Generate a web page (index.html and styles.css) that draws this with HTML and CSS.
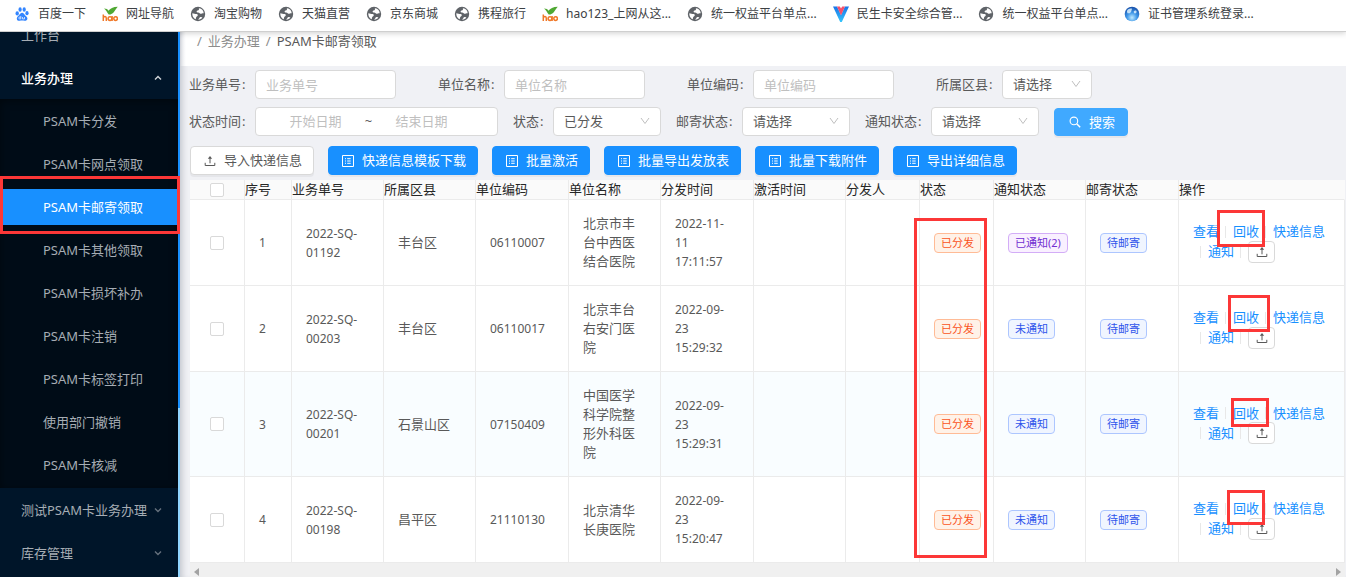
FILE: index.html
```html
<!DOCTYPE html>
<html lang="zh-CN">
<head>
<meta charset="utf-8">
<title>PSAM卡邮寄领取</title>
<link rel="stylesheet" href="styles.css">
</head>
<body>
<svg class="sprite" aria-hidden="true">
  <symbol id="i-paw" viewBox="0 0 16 16"><g fill="#3385ff"><ellipse cx="3.2" cy="7.4" rx="1.700" ry="2.100"/><ellipse cx="6.100" cy="3.500" rx="1.600" ry="2.200"/><ellipse cx="10.200" cy="3.500" rx="1.600" ry="2.200"/><ellipse cx="13" cy="7.200" rx="1.600" ry="2.100"/><path d="M8.1 6.8c1.6 0 2.1 1.5 3.2 2.6 1.1 1 2.300 1.800 2.100 3.400-.2 1.700-1.700 2.200-3 2-1.600-.3-3-.3-4.600 0-1.300.2-2.900-.3-3-2.100-.1-1.300.8-2.300 1.900-3.300 1.200-1.100 1.800-2.600 3.400-2.600z"/></g><path d="M6.800 10.200v2.700H5.700q-1-.1-1-.9t1-.9h1M8.500 11v1.900h2V11" fill="none" stroke="#fff" stroke-width=".7"/></symbol>
  <symbol id="i-hao" viewBox="0 0 16 16"><path d="M2 2.600c2.500 0 3.700.9 4.400 2.200C8.200 2.300 11 .8 15.800.7c-1.600 2-2.400 3-3.700 5-1.200 1.800-3 2.900-5.400 2.900C5.200 6.600 4 4 2 2.600z" fill="#4fa833"/><g fill="none" stroke="#f07828" stroke-width="1.500"><path d="M1.300 8.500V15M1.300 12q.4-1.600 1.700-1.500 1.300.1 1.300 1.700V15"/><circle cx="8" cy="12.600" r="1.900"/><path d="M10.100 10v5"/><circle cx="13.600" cy="12.600" r="1.800"/></g></symbol>
  <symbol id="i-globe" viewBox="0 0 16 16"><circle cx="8" cy="8" r="7.200" fill="#5f6368"/><path d="M9.700 2.300c-1 .1-1.200 1-.6 1.500-.7.800-2.200.6-2.500 1.600-.1.700.6 1.100 1.600 1.100 1.200 0 1.300 1.100 2.300 1.300.9.100 1.500-.6 3.200-.6-.1-2.300-1.700-4.300-4-4.900zM2.300 7.300c1.500.1 2.900.8 4.300.8 1.200.1 1.500 1.200.9 2-.6.600-1.400.6-1.400 1.400 0 .7-.2 1.500-.9 1.700-1.900-1.200-3.100-3.400-2.900-5.900zM8.300 13.700c.1-.7.9-.9 1.100-1.600.2-.6.900-1 1.600-1 .6 0 1 .4 1.400.4-1 1.300-2.400 2.100-4.100 2.200z" fill="#fff"/></symbol>
  <linearGradient id="g-vee" x1="0" y1="0" x2="0" y2="1"><stop offset="0" stop-color="#1973e8"/><stop offset="1" stop-color="#35c6fb"/></linearGradient>
  <radialGradient id="g-ball" cx=".5" cy=".75" r=".7"><stop offset="0" stop-color="#bfeaff"/><stop offset=".5" stop-color="#3d96e8"/><stop offset="1" stop-color="#1a55ae"/></radialGradient>
  <symbol id="i-vee" viewBox="0 0 16 16"><path d="M0 .5h4L8 9l4-8.500h4L8.800 16H7.200z" fill="url(#g-vee)"/><path d="M4 .5h2.800L8 2.500 9.200.5H12L8 9.500z" fill="#f5516c"/></symbol>
  <symbol id="i-ball" viewBox="0 0 16 16"><circle cx="8" cy="8" r="7.300" fill="url(#g-ball)"/><path d="M3 4.800C4 2.800 6 2.200 7.800 2.600c.4.800-.3 1.500-.4 2.200.1 1-.9 1.400-1.200 2.300-.7.500-1.500-.2-2.200.3-.8-.4-1.200-1.400-1-2.600zM9.800 5.200c.8-.8 1.800-.9 2.700-.2.300 1.300-.4 2.300-1.500 2.500-.9-.3-1.400-1.300-1.200-2.300z" fill="#e6f7ff" opacity=".8"/></symbol>
  <symbol id="i-down" viewBox="0 0 10 10"><path d="M1 2l4 5.500L9 2" fill="none" stroke="currentColor"/></symbol>
  <symbol id="i-caret" viewBox="0 0 8 8"><path d="M1 2.500l3 3 3-3" fill="none" stroke="currentColor" stroke-width="1.400"/></symbol>
  <symbol id="i-upload" viewBox="0 0 12 12"><path d="M1.200 7.800v2.700h9.600V7.800M6 8.300V2.500" fill="none" stroke="currentColor"/><path d="M6 1l2.200 2.800H3.800z" fill="currentColor"/></symbol>
  <symbol id="i-list" viewBox="0 0 12 12"><path d="M.5.5h11v11H.5zM5.200 3.700h3.500M5.200 6h3.500M5.200 8.300h3.500M3 3.700h1M3 6h1M3 8.300h1" fill="none" stroke="currentColor"/></symbol>
  <symbol id="i-search" viewBox="0 0 12 12"><path d="M7.700 7.700l3.500 3.600" fill="none" stroke="currentColor" stroke-width="1.400"/><circle cx="4.900" cy="4.900" r="3.800" fill="none" stroke="currentColor" stroke-width="1.100"/></symbol>
</svg>

<nav class="bookmarks" aria-label="书签">
  <a href="#"><svg><use href="#i-paw"/></svg>百度一下</a>
  <a href="#"><svg><use href="#i-hao"/></svg>网址导航</a>
  <a href="#"><svg><use href="#i-globe"/></svg>淘宝购物</a>
  <a href="#"><svg><use href="#i-globe"/></svg>天猫直营</a>
  <a href="#"><svg><use href="#i-globe"/></svg>京东商城</a>
  <a href="#"><svg><use href="#i-globe"/></svg>携程旅行</a>
  <a href="#"><svg><use href="#i-hao"/></svg>hao123_上网从这...</a>
  <a href="#"><svg><use href="#i-globe"/></svg>统一权益平台单点...</a>
  <a href="#"><svg><use href="#i-vee"/></svg>民生卡安全综合管...</a>
  <a href="#"><svg><use href="#i-globe"/></svg>统一权益平台单点...</a>
  <a href="#"><svg><use href="#i-ball"/></svg>证书管理系统登录...</a>
</nav>

<div class="layout">
  <aside class="sidebar">
    <nav class="menu" aria-label="主菜单">
      <a class="item" href="#">工作台</a>
      <a class="item open" href="#">业务办理<svg class="up"><use href="#i-caret"/></svg></a>
      <div class="submenu">
        <a class="item" href="#">PSAM卡分发</a>
        <a class="item" href="#">PSAM卡网点领取</a>
        <a class="item selected" href="#">PSAM卡邮寄领取</a>
        <a class="item" href="#">PSAM卡其他领取</a>
        <a class="item" href="#">PSAM卡损坏补办</a>
        <a class="item" href="#">PSAM卡注销</a>
        <a class="item" href="#">PSAM卡标签打印</a>
        <a class="item" href="#">使用部门撤销</a>
        <a class="item" href="#">PSAM卡核减</a>
      </div>
      <a class="item" href="#">测试PSAM卡业务办理<svg><use href="#i-caret"/></svg></a>
      <a class="item" href="#">库存管理<svg><use href="#i-caret"/></svg></a>
    </nav>
    <div class="side-scroll"><div class="side-thumb"></div></div>
  </aside>

  <main class="content">
    <nav class="crumbs" aria-label="面包屑"><span>/</span><a href="#">业务办理</a><span>/</span><b>PSAM卡邮寄领取</b></nav>

    <form class="filters">
      <div class="form-row wide">
        <div class="field"><label for="no">业务单号<i>:</i></label><input class="box" id="no" placeholder="业务单号"></div>
        <div class="field"><label for="unit">单位名称<i>:</i></label><input class="box" id="unit" placeholder="单位名称"></div>
        <div class="field"><label for="code">单位编码<i>:</i></label><input class="box" id="code" placeholder="单位编码"></div>
        <div class="field"><label for="area">所属区县<i>:</i></label><span class="select small"><select class="box" id="area"><option>请选择</option></select><svg><use href="#i-down"/></svg></span></div>
      </div>
      <div class="form-row">
        <div class="field"><label for="from">状态时间<i>:</i></label><span class="box range"><input id="from" placeholder="开始日期"><span>~</span><input aria-label="结束日期" placeholder="结束日期"></span></div>
        <div class="field"><label for="st">状态<i>:</i></label><span class="select"><select class="box" id="st"><option>已分发</option></select><svg><use href="#i-down"/></svg></span></div>
        <div class="field"><label for="mail">邮寄状态<i>:</i></label><span class="select"><select class="box" id="mail"><option>请选择</option></select><svg><use href="#i-down"/></svg></span></div>
        <div class="field"><label for="notice">通知状态<i>:</i></label><span class="select"><select class="box" id="notice"><option>请选择</option></select><svg><use href="#i-down"/></svg></span></div>
        <button class="btn search" type="button"><svg><use href="#i-search"/></svg>搜索</button>
      </div>
      <div class="form-row tools">
        <button class="btn plain" type="button"><svg><use href="#i-upload"/></svg>导入快递信息</button>
        <button class="btn" type="button"><svg><use href="#i-list"/></svg>快递信息模板下载</button>
        <button class="btn" type="button"><svg><use href="#i-list"/></svg>批量激活</button>
        <button class="btn" type="button"><svg><use href="#i-list"/></svg>批量导出发放表</button>
        <button class="btn" type="button"><svg><use href="#i-list"/></svg>批量下载附件</button>
        <button class="btn" type="button"><svg><use href="#i-list"/></svg>导出详细信息</button>
      </div>
    </form>

    <div class="table-wrap">
      <table>
        <colgroup><col class="c-check"><col class="c-idx"><col class="c-mid"><col class="c-mid"><col class="c-wide"><col class="c-mid"><col class="c-wide"><col class="c-mid"><col class="c-tag"><col class="c-tag"><col class="c-mid"><col class="c-wide"><col></colgroup>
        <thead>
          <tr><th class="check"><input type="checkbox" aria-label="全选"></th><th>序号</th><th>业务单号</th><th>所属区县</th><th>单位编码</th><th>单位名称</th><th>分发时间</th><th>激活时间</th><th>分发人</th><th>状态</th><th>通知状态</th><th>邮寄状态</th><th>操作</th></tr>
        </thead>
        <tbody>
          <tr>
            <td class="check"><input type="checkbox" aria-label="选择1"></td><td class="num">1</td><td class="num">2022-SQ-01192</td><td>丰台区</td><td class="num">06110007</td><td>北京市丰台中西医结合医院</td><td class="num time">2022-11-11 17:11:57</td><td></td><td></td>
            <td><span class="tag orange">已分发</span></td><td><span class="tag purple">已通知(2)</span></td><td><span class="tag blue">待邮寄</span></td>
            <td class="ops"><div><a href="#">查看</a><i></i><a href="#">回收</a><i></i><a href="#">快递信息</a></div><div class="second"><i></i><a href="#">通知</a><i></i><button type="button" aria-label="上传"><svg><use href="#i-upload"/></svg></button></div></td>
          </tr>
          <tr>
            <td class="check"><input type="checkbox" aria-label="选择2"></td><td class="num">2</td><td class="num">2022-SQ-00203</td><td>丰台区</td><td class="num">06110017</td><td>北京丰台右安门医院</td><td class="num time">2022-09-23 15:29:32</td><td></td><td></td>
            <td><span class="tag orange">已分发</span></td><td><span class="tag blue">未通知</span></td><td><span class="tag blue">待邮寄</span></td>
            <td class="ops"><div><a href="#">查看</a><i></i><a href="#">回收</a><i></i><a href="#">快递信息</a></div><div class="second"><i></i><a href="#">通知</a><i></i><button type="button" aria-label="上传"><svg><use href="#i-upload"/></svg></button></div></td>
          </tr>
          <tr class="hover">
            <td class="check"><input type="checkbox" aria-label="选择3"></td><td class="num">3</td><td class="num">2022-SQ-00201</td><td>石景山区</td><td class="num">07150409</td><td>中国医学科学院整形外科医院</td><td class="num time">2022-09-23 15:29:31</td><td></td><td></td>
            <td><span class="tag orange">已分发</span></td><td><span class="tag blue">未通知</span></td><td><span class="tag blue">待邮寄</span></td>
            <td class="ops"><div><a href="#">查看</a><i></i><a href="#">回收</a><i></i><a href="#">快递信息</a></div><div class="second"><i></i><a href="#">通知</a><i></i><button type="button" aria-label="上传"><svg><use href="#i-upload"/></svg></button></div></td>
          </tr>
          <tr>
            <td class="check"><input type="checkbox" aria-label="选择4"></td><td class="num">4</td><td class="num">2022-SQ-00198</td><td>昌平区</td><td class="num">21110130</td><td>北京清华长庚医院</td><td class="num time">2022-09-23 15:20:47</td><td></td><td></td>
            <td><span class="tag orange">已分发</span></td><td><span class="tag blue">未通知</span></td><td><span class="tag blue">待邮寄</span></td>
            <td class="ops"><div><a href="#">查看</a><i></i><a href="#">回收</a><i></i><a href="#">快递信息</a></div><div class="second"><i></i><a href="#">通知</a><i></i><button type="button" aria-label="上传"><svg><use href="#i-upload"/></svg></button></div></td>
          </tr>
        </tbody>
      </table>
      <div class="hscroll"><svg viewBox="0 0 5 8"><path d="M5 0v8L0 4z"/></svg><svg viewBox="0 0 5 8"><path d="M0 0v8l5-4z"/></svg></div>
    </div>
  </main>
</div>

<div class="mark mark-menu"></div>
<div class="mark mark-status"></div>
<div class="mark mark-r1"></div>
<div class="mark mark-r2"></div>
<div class="mark mark-r3"></div>
<div class="mark mark-r4"></div>
</body>
</html>
```

FILE: styles.css
```css
* { box-sizing: border-box; }

body {
  margin: 0;
  height: 100vh;
  display: flex;
  flex-direction: column;
  position: relative;
  overflow: hidden;
  background: #fff;
  color: #595959;
  font: 13px/19px "Noto Sans", "Noto Sans CJK SC", sans-serif;
}

a { color: inherit; text-decoration: none; }
i, b { font-style: normal; font-weight: 400; }
input, select, button { font: inherit; color: inherit; margin: 0; }
.sprite { position: absolute; width: 0; height: 0; }

/* bookmarks */
.bookmarks {
  flex: none;
  display: flex;
  gap: 16px;
  height: 32px;
  padding: 0 14px 4px;
  align-items: center;
  border-bottom: 1px solid #cfcfcf;
  background: #fff;
  box-shadow: 0 1px 6px rgba(0, 0, 0, .2);
  position: relative;
  font-size: 12px;
  color: #3c4043;
  white-space: nowrap;
}
.bookmarks a { display: flex; align-items: center; gap: 8px; }
.bookmarks svg { width: 16px; height: 16px; }

.layout { flex: 1; min-height: 0; display: flex; }

/* sidebar */
.sidebar {
  flex: none;
  width: 180px;
  display: flex;
  overflow: hidden;
  background: #001529;
  position: relative;
}
.menu { flex: 1; margin-top: -15px; }
.item {
  display: flex;
  align-items: center;
  justify-content: space-between;
  height: 36px;
  margin-bottom: 7px;
  padding: 0 16px 0 21px;
  color: #a6adb4;
  white-space: nowrap;
}
.item svg { width: 8px; height: 8px; color: #65717d; }
.item.open { color: #fff; margin-bottom: 3px; font-weight: 500; }
.item .up { transform: rotate(180deg); color: #d0d4d8; }
.submenu {
  background: #000c17;
  padding: 4px 0 5px;
  margin-bottom: 4px;
  display: flex;
  flex-direction: column;
  gap: 7px;
  box-shadow: inset 0 2px 8px rgba(0, 0, 0, .45);
}
.submenu .item { margin: 0; padding-left: 43px; }
.submenu .selected { background: #1890ff; color: #fff; }
.side-scroll { width: 2px; background: #91d5ff; }
.side-thumb { height: 69%; background: #1890ff; }

/* content */
.content {
  flex: 1;
  min-width: 0;
  display: flex;
  flex-direction: column;
  overflow: hidden;
  background: #f0f1f5;
  box-shadow: inset 6px 0 6px -4px rgba(0, 21, 41, .2);
}
.content > * { flex: none; }
.crumbs {
  display: flex;
  gap: 6px;
  height: 34px;
  padding: 0 17px;
  background: linear-gradient(90deg, rgba(255, 255, 255, 0), #fff 6px);
  color: #8c8c8c;
}
.crumbs b { color: #595959; }

.filters { display: flex; flex-direction: column; padding: 4px 0 5px 9px; }
.form-row { display: flex; gap: 15px; align-items: center; margin-bottom: 8px; }
.form-row.wide { gap: 42px; }
.form-row.tools { gap: 14px; margin: 2px 0 0; padding-left: 1px; }
.field { display: flex; align-items: center; }
.field label { display: flex; white-space: nowrap; }
.field label i { width: 14px; padding-left: 1px; }
.box {
  height: 29px;
  width: 141px;
  padding: 0 10px;
  border: 1px solid #d9d9d9;
  border-radius: 4px;
  background: #fff;
  outline: none;
}
.range { display: flex; align-items: center; width: 243px; padding-right: 26px; }
.range input {
  flex: 1;
  min-width: 0;
  border: 0;
  padding: 0;
  background: none;
  text-align: center;
  outline: none;
}
::placeholder { color: #bfbfbf; opacity: 1; }
.select { position: relative; width: 108px; }
.select.small { width: 90px; }
.select .box { display: block; width: 100%; appearance: none; }
.select svg {
  position: absolute;
  right: 11px;
  top: 9px;
  width: 10px;
  height: 10px;
  color: #bfbfbf;
  pointer-events: none;
}
.btn {
  display: flex;
  align-items: center;
  gap: 8px;
  height: 29px;
  padding: 0 11px 0 13px;
  border: 1px solid #1890ff;
  border-radius: 4px;
  background: #1890ff;
  color: #fff;
  white-space: nowrap;
  box-shadow: 0 2px 0 rgba(0, 0, 0, .045);
}
.btn svg { width: 12px; height: 12px; }
.btn.plain { background: #fff; border-color: #d9d9d9; color: #595959; }
.btn.search {
  align-self: flex-end;
  height: 28px;
  padding: 0 12px 0 14px;
  background: #40a9ff;
  border-color: #40a9ff;
}

/* table */
.table-wrap { padding: 0 1px 0 10px; }
table {
  width: 100%;
  table-layout: fixed;
  border-collapse: separate;
  border-spacing: 0;
  background: #fff;
}
.c-check { width: 55px; }
.c-idx { width: 47px; }
.c-mid { width: 92px; }
.c-wide { width: 93px; }
.c-tag { width: 74px; }
th, td { border: solid #ebebeb; border-width: 0 1px 1px 0; text-align: left; }
th {
  height: 20px;
  padding: 0;
  background: #fafafa;
  color: #262626;
  font-weight: 400;
  white-space: nowrap;
}
thead th:last-child { border-right-color: #fafafa; }
td { padding: 14px; }
.num { font-size: 12px; }
.time { padding-right: 18px; }
.hover td { background: #f9fdff; }
.check { text-align: center; padding: 0; }
.check input {
  appearance: none;
  display: block;
  width: 14px;
  height: 14px;
  margin: 0 auto;
  border: 1px solid #d9d9d9;
  border-radius: 2px;
  background: #fff;
}
.tag {
  display: block;
  width: max-content;
  height: 20px;
  padding: 0 6px;
  border: 1px solid;
  border-radius: 4px;
  font-size: 11px;
  line-height: 18px;
  white-space: nowrap;
}
.orange { color: #fa541c; background: #fff2e8; border-color: #ffbb96; }
.purple { color: #722ed1; background: #f9f0ff; border-color: #d3adf7; }
.blue { color: #2f54eb; background: #f0f5ff; border-color: #adc6ff; }
.ops { color: #1890ff; padding: 0 0 2px 14px; }
.ops div { display: flex; align-items: center; height: 20px; white-space: nowrap; }
.ops .second { padding-left: 1px; }
.ops i { width: 1px; height: 12px; margin: 0 7px 0 6px; background: #e8e8e8; }
.ops button {
  flex: none;
  display: grid;
  place-items: center;
  width: 27px;
  height: 22px;
  padding: 0;
  border: 1px solid #d9d9d9;
  border-radius: 4px;
  background: #fff;
  color: #595959;
}
.ops svg { width: 12px; height: 12px; }
.hscroll {
  display: flex;
  justify-content: space-between;
  align-items: center;
  height: 18px;
  padding: 0 4px;
  background: #f0f0f0;
}
.hscroll svg { width: 5px; height: 8px; fill: #a3a3a3; }

/* red annotation frames drawn over the page */
.mark { position: absolute; border: 3px solid #fc3737; pointer-events: none; }
.mark-menu { left: 0; top: 176px; width: 180px; height: 58px; }
.mark-status { left: 914px; top: 218px; width: 73px; height: 340px; }
.mark-r1 { left: 1217px; top: 210px; width: 48px; height: 37px; }
.mark-r2 { left: 1228px; top: 295px; width: 42px; height: 37px; }
.mark-r3 { left: 1231px; top: 398px; width: 38px; height: 29px; }
.mark-r4 { left: 1227px; top: 490px; width: 38px; height: 35px; }
```
